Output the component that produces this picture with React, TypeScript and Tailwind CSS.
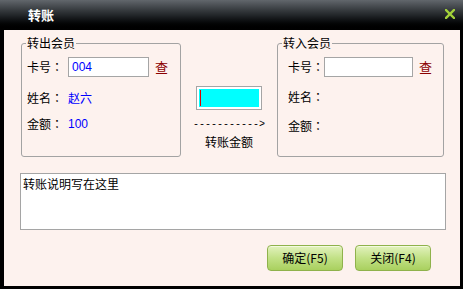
import React from "react";

const cjk = "font-['SimSun','Noto_Sans_CJK_SC',sans-serif]";

function Row({
  label,
  labelW,
  children,
  className = "",
}: {
  label: string;
  labelW: string;
  children?: React.ReactNode;
  className?: string;
}) {
  return (
    <div className={`flex h-[20px] items-center ${className}`}>
      <span className={`${labelW} shrink-0 whitespace-nowrap text-black`}>
        {label}
        <span className="font-['Noto_Sans_CJK_TC',sans-serif]">：</span>
      </span>
      {children}
    </div>
  );
}

function CardInput({ value, w }: { value?: string; w: string }) {
  return (
    <>
      <div
        className={`${w} flex h-[20px] items-center border border-[#a5a5a5] bg-white px-[3px] font-['Liberation_Sans',sans-serif] text-[12px] text-[#0000ff]`}
      >
        {value}
      </div>
      <span className="ml-[6px] text-[13px] text-[#8b0000]">查</span>
    </>
  );
}

function Button({ label }: { label: string }) {
  return (
    <button className="flex h-[26px] w-[76px] items-center justify-center rounded-[4px] border border-[#8fb24c] bg-gradient-to-b from-[#e2f2bd] via-[#c2e186] to-[#a9d05e] text-[12px] text-black shadow-[inset_0_1px_0_#f3fadf]">
      {label}
    </button>
  );
}

export default function App() {
  return (
    <div
      className={`flex h-[289px] w-[463px] flex-col bg-black text-[12px] leading-[16px] ${cjk}`}
    >
      <div className="flex h-[30px] shrink-0 items-center justify-between bg-gradient-to-b from-[#62676c] via-[#23272a] to-[#000] pl-[28px] pr-[8px]">
        <span className="text-[13px] font-bold text-white">转账</span>
        <svg width="10" height="10" viewBox="0 0 10 10" className="mb-[2px]">
          <path
            d="M1 1 L9 9 M9 1 L1 9"
            stroke="#a3d13a"
            strokeWidth="2.4"
            strokeLinecap="square"
          />
        </svg>
      </div>

      <div className="mb-[3px] ml-[4px] mr-[3px] flex flex-1 flex-col bg-[#fdf2ee]">
        <div className="ml-[17px] mt-[5px] flex">
          <fieldset className="h-[122px] w-[160px] rounded-[3px] border border-[#a3a3a3]">
            <legend className="ml-[4px] px-[1px] leading-[16px] text-black">
              转出会员
            </legend>
            <div className="pl-[5px] pt-[6px]">
              <Row label="卡号" labelW="w-[41px]">
                <CardInput value="004" w="w-[81px]" />
              </Row>
              <Row label="姓名" labelW="w-[41px]" className="mt-[11px]">
                <span className="text-[#0000ff]">赵六</span>
              </Row>
              <Row label="金额" labelW="w-[41px]" className="mt-[6px]">
                <span className="font-['Liberation_Sans',sans-serif] text-[#0000ff]">
                  100
                </span>
              </Row>
            </div>
          </fieldset>

          <div className="flex w-[96px] flex-col items-center pt-[51px]">
            <div className="flex h-[24px] w-[66px] border border-[#a5a5a5] bg-white p-[2px]">
              <div className="flex flex-1 bg-[#00ffff] pl-[1px]">
                <div className="my-[1px] w-px bg-[#e00000]" />
              </div>
            </div>
            <div className="mt-[8px] h-[14px] font-['Liberation_Mono',monospace] text-[10px] leading-[14px] text-black">
              -----------&gt;
            </div>
            <div className="mt-[2px] text-black">转账金额</div>
          </div>

          <fieldset className="h-[122px] w-[167px] rounded-[3px] border border-[#a3a3a3]">
            <legend className="ml-[4px] px-[1px] leading-[16px] text-black">
              转入会员
            </legend>
            <div className="pl-[10px] pt-[6px]">
              <Row label="卡号" labelW="w-[36px]">
                <CardInput w="w-[89px]" />
              </Row>
              <Row label="姓名" labelW="w-[36px]" className="mt-[10px]" />
              <Row label="金额" labelW="w-[36px]" className="mt-[9px]" />
            </div>
          </fieldset>
        </div>

        <div className="ml-[16px] mt-[16px] h-[57px] w-[426px] border border-[#a5a5a5] bg-white px-[2px] pt-[2px] text-black">
          转账说明写在这里
        </div>

        <div className="mr-[29px] mt-[15px] flex justify-end gap-[12px]">
          <Button label="确定(F5)" />
          <Button label="关闭(F4)" />
        </div>
      </div>
    </div>
  );
}
